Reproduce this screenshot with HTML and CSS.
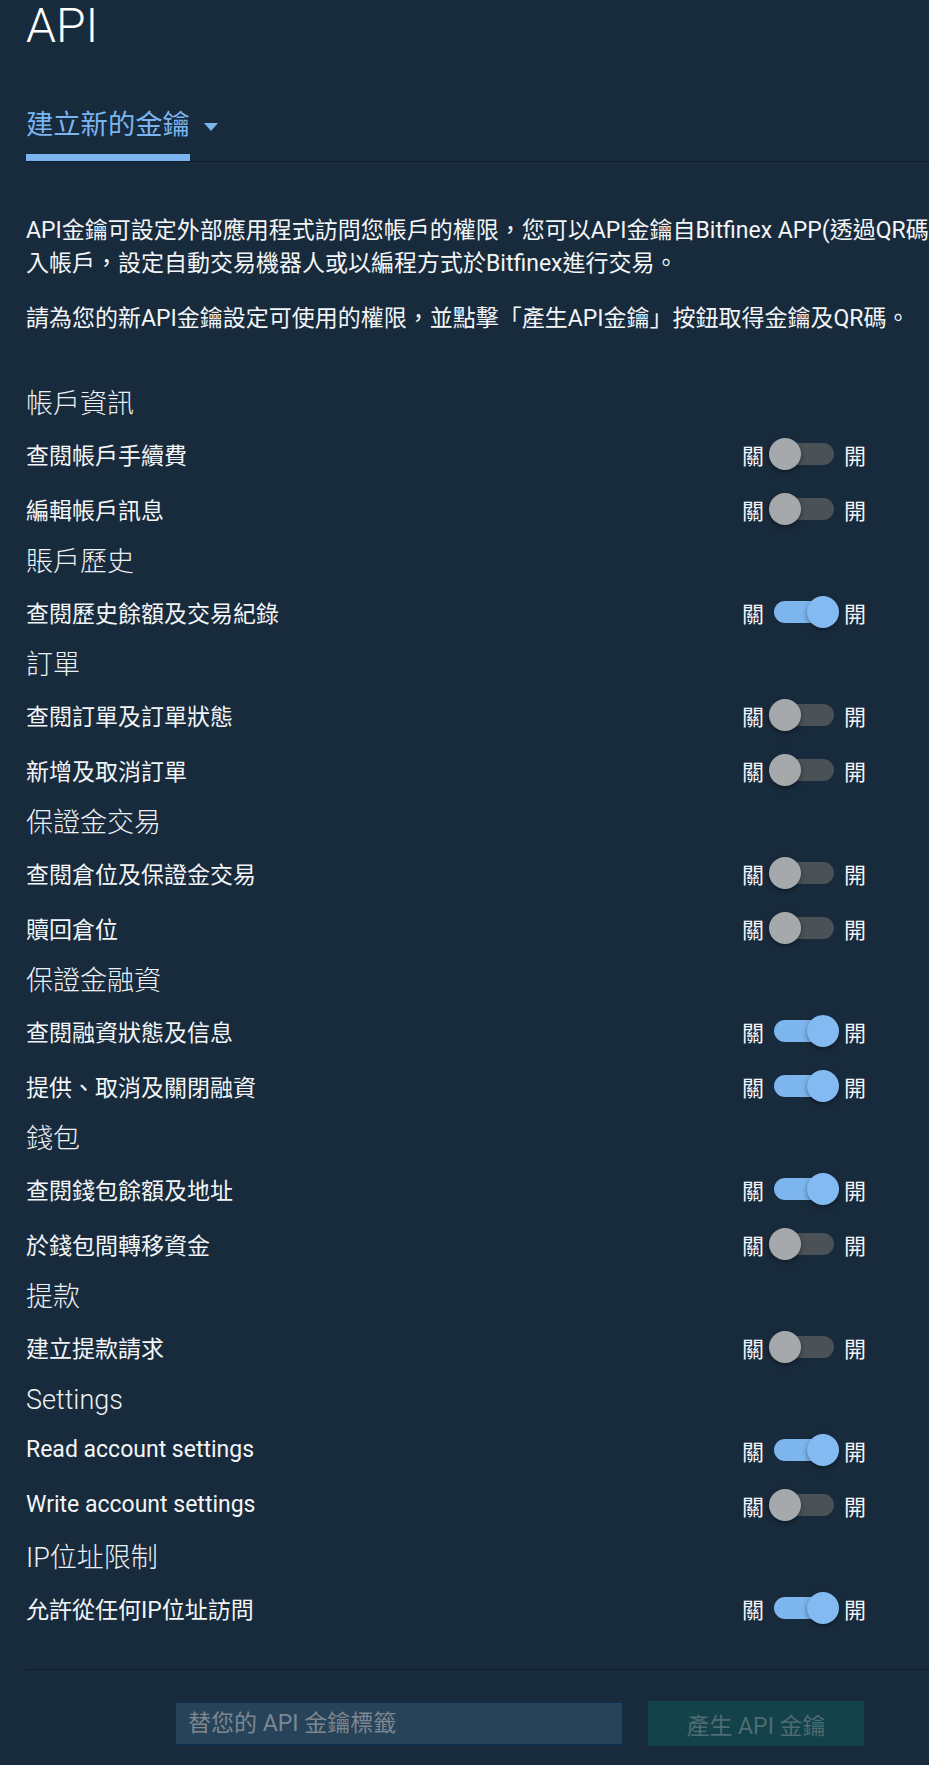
FILE: index.html
```html
<!DOCTYPE html>
<html lang="zh-Hant">
<head>
  <meta charset="UTF-8">
  <title>API</title>
  <meta name="viewport" content="width=device-width, initial-scale=1.0">
  <link rel="stylesheet" href="styles.css">
</head>
<body>
<div class="page">

  <h1 class="page-title">API</h1>

  <div class="tabs">
    <a class="tab active">建立新的金鑰</a>
    <span class="caret"></span>
  </div>

  <div class="intro">
    <p>API金鑰可設定外部應用程式訪問您帳戶的權限，您可以API金鑰自Bitfinex APP(透過QR碼掃描)登入帳戶，設定自動交易機器人或以編程方式於Bitfinex進行交易。</p>
    <p>請為您的新API金鑰設定可使用的權限，並點擊「產生API金鑰」按鈕取得金鑰及QR碼。</p>
  </div>

  <div class="permissions">
    <h3 class="group-title">帳戶資訊</h3>
    <div class="perm-row">
      <span class="perm-label">查閱帳戶手續費</span>
      <label class="toggle"><span>關</span><span class="switch"><input type="checkbox"><span class="track"></span></span><span>開</span></label>
    </div>
    <div class="perm-row">
      <span class="perm-label">編輯帳戶訊息</span>
      <label class="toggle"><span>關</span><span class="switch"><input type="checkbox"><span class="track"></span></span><span>開</span></label>
    </div>

    <h3 class="group-title">賬戶歷史</h3>
    <div class="perm-row">
      <span class="perm-label">查閱歷史餘額及交易紀錄</span>
      <label class="toggle"><span>關</span><span class="switch"><input type="checkbox" checked><span class="track"></span></span><span>開</span></label>
    </div>

    <h3 class="group-title">訂單</h3>
    <div class="perm-row">
      <span class="perm-label">查閱訂單及訂單狀態</span>
      <label class="toggle"><span>關</span><span class="switch"><input type="checkbox"><span class="track"></span></span><span>開</span></label>
    </div>
    <div class="perm-row">
      <span class="perm-label">新增及取消訂單</span>
      <label class="toggle"><span>關</span><span class="switch"><input type="checkbox"><span class="track"></span></span><span>開</span></label>
    </div>

    <h3 class="group-title">保證金交易</h3>
    <div class="perm-row">
      <span class="perm-label">查閱倉位及保證金交易</span>
      <label class="toggle"><span>關</span><span class="switch"><input type="checkbox"><span class="track"></span></span><span>開</span></label>
    </div>
    <div class="perm-row">
      <span class="perm-label">贖回倉位</span>
      <label class="toggle"><span>關</span><span class="switch"><input type="checkbox"><span class="track"></span></span><span>開</span></label>
    </div>

    <h3 class="group-title">保證金融資</h3>
    <div class="perm-row">
      <span class="perm-label">查閱融資狀態及信息</span>
      <label class="toggle"><span>關</span><span class="switch"><input type="checkbox" checked><span class="track"></span></span><span>開</span></label>
    </div>
    <div class="perm-row">
      <span class="perm-label">提供、取消及關閉融資</span>
      <label class="toggle"><span>關</span><span class="switch"><input type="checkbox" checked><span class="track"></span></span><span>開</span></label>
    </div>

    <h3 class="group-title">錢包</h3>
    <div class="perm-row">
      <span class="perm-label">查閱錢包餘額及地址</span>
      <label class="toggle"><span>關</span><span class="switch"><input type="checkbox" checked><span class="track"></span></span><span>開</span></label>
    </div>
    <div class="perm-row">
      <span class="perm-label">於錢包間轉移資金</span>
      <label class="toggle"><span>關</span><span class="switch"><input type="checkbox"><span class="track"></span></span><span>開</span></label>
    </div>

    <h3 class="group-title">提款</h3>
    <div class="perm-row">
      <span class="perm-label">建立提款請求</span>
      <label class="toggle"><span>關</span><span class="switch"><input type="checkbox"><span class="track"></span></span><span>開</span></label>
    </div>

    <h3 class="group-title">Settings</h3>
    <div class="perm-row">
      <span class="perm-label">Read account settings</span>
      <label class="toggle"><span>關</span><span class="switch"><input type="checkbox" checked><span class="track"></span></span><span>開</span></label>
    </div>
    <div class="perm-row">
      <span class="perm-label">Write account settings</span>
      <label class="toggle"><span>關</span><span class="switch"><input type="checkbox"><span class="track"></span></span><span>開</span></label>
    </div>

    <h3 class="group-title">IP位址限制</h3>
    <div class="perm-row">
      <span class="perm-label">允許從任何IP位址訪問</span>
      <label class="toggle"><span>關</span><span class="switch"><input type="checkbox" checked><span class="track"></span></span><span>開</span></label>
    </div>
  </div>

  <div class="divider"></div>

  <div class="actions">
    <input class="key-label" type="text" placeholder="替您的 API 金鑰標籤">
    <button class="generate" disabled>產生 API 金鑰</button>
  </div>

</div>
</body>
</html>
```

FILE: styles.css
```css
body {
  margin: 0;
  padding: 0;
  background: #182b3d;
  color: #f3f5f7;
  font-family: Roboto, "Noto Sans CJK TC", sans-serif;
  overflow-x: hidden;
}

.page {
  padding: 0 0 20px 26px;
}

.page-title {
  margin: 0;
  font-size: 48px;
  font-weight: 300;
  line-height: 52px;
  color: #ffffff;
}

/* tab bar */
.tabs {
  display: flex;
  margin-top: 40px;
  border-bottom: 1px solid #0f1d2a;
}

.tab {
  padding: 17px 0 13px;
  font-size: 27.3px;
  line-height: 32px;
  color: #7ab5f0;
  cursor: pointer;
}

.tab.active {
  border-bottom: 7px solid #7ab5f0;
}

.caret {
  align-self: flex-start;
  margin: 31px 0 0 14px;
  width: 0;
  height: 0;
  border-left: 7px solid transparent;
  border-right: 7px solid transparent;
  border-top: 8px solid #7ab5f0;
}

/* description text, runs past the right edge */
.intro {
  margin-top: 52px;
  width: 990px;
  font-size: 23px;
  line-height: 33px;
}

.intro p {
  margin: 0 0 22px;
}

.intro p:last-child {
  margin-bottom: 0;
}

/* permission list */
.permissions {
  margin-top: 43px;
  width: 840px;
}

.group-title {
  margin: 0;
  height: 48px;
  box-sizing: border-box;
  padding-top: 10px;
  font-size: 27px;
  font-weight: 300;
  line-height: 32px;
  color: #eef1f4;
}

.perm-row {
  display: flex;
  align-items: center;
  justify-content: space-between;
  height: 55px;
  font-size: 23px;
}

.toggle {
  display: flex;
  align-items: center;
  gap: 5px;
  font-size: 22px;
  cursor: pointer;
}

.switch {
  position: relative;
  width: 70px;
  height: 32px;
}

.switch input {
  display: none;
}

.track {
  position: absolute;
  left: 5px;
  right: 5px;
  top: 5px;
  height: 22px;
  border-radius: 11px;
  background: #4a5257;
  transition: background 0.2s ease;
}

.track::after {
  content: "";
  position: absolute;
  top: -5px;
  left: -5px;
  width: 32px;
  height: 32px;
  border-radius: 50%;
  background: #a6a9ac;
  box-shadow: 0 2px 5px rgba(0, 0, 0, 0.4);
  transition: left 0.2s ease, background 0.2s ease;
}

.switch input:checked + .track {
  background: #7db5ee;
}

.switch input:checked + .track::after {
  left: calc(100% - 27px);
  background: #83baf1;
}

/* footer */
.divider {
  margin-top: 34px;
  border-top: 1px solid #0f1d2a;
}

.actions {
  display: flex;
  align-items: center;
  justify-content: flex-end;
  gap: 25px;
  width: 838px;
  padding-top: 31px;
}

.key-label {
  width: 448px;
  height: 43px;
  box-sizing: border-box;
  padding: 0 12px;
  background: #27435a;
  border: 1px solid #0d2f4f;
  color: #dfe5ea;
  font-family: Roboto, "Noto Sans CJK TC", sans-serif;
  font-size: 23px;
  outline: none;
}

.key-label::placeholder {
  color: #7d8790;
}

.generate {
  width: 216px;
  height: 45px;
  background: #14424a;
  border: none;
  color: #4e6c72;
  font-family: Roboto, "Noto Sans CJK TC", sans-serif;
  font-size: 23px;
}
```
